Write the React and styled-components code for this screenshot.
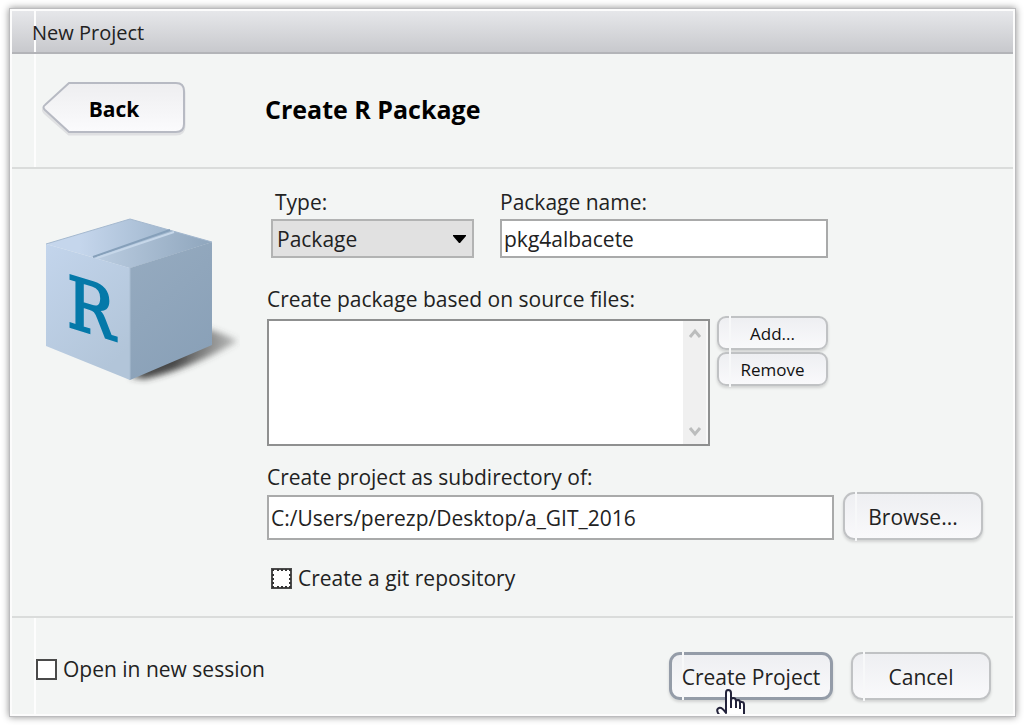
import React from 'react';
import styled, { createGlobalStyle } from 'styled-components';

const GlobalStyle = createGlobalStyle`
  *, *::before, *::after { box-sizing: border-box; }
  body {
    margin: 0;
    background: #fff;
    color: #222;
    font: 21px/24px "Open Sans", "Noto Sans", sans-serif;
  }
  button, input, select { font: inherit; color: inherit; margin: 0; }
`;

const Page = styled.div`
  min-height: 100vh;
  padding: 9px 9px 9px 10px;
  display: flex;
  overflow: hidden;
`;

const Dialog = styled.form`
  flex: 1;
  display: flex;
  flex-direction: column;
  background: #f3f5f4;
  border: 2px solid #fcfcfc;
  outline: 1px solid #bcbcbe;
  box-shadow: 0 0 7px 1px rgba(0, 0, 0, 0.45);
`;

const seam = 'linear-gradient(#fdfdfd, #fdfdfd) 22px 0 / 2px 100% no-repeat';

const TitleBar = styled.header`
  height: 43px;
  padding: 2px 20px 0;
  display: flex;
  align-items: center;
  font-size: 20px;
  background: ${seam}, linear-gradient(#e6e7ea, #c8c9cd);
  border-bottom: 2px solid #b3b4b8;
`;

const Head = styled.div`
  height: 115px;
  padding: 28px 30px;
  display: flex;
  align-items: flex-start;
  gap: 79px;
  background: ${seam};
  border-bottom: 2px solid #dadcdb;
`;

const BackButton = styled.button`
  display: grid;
  width: 144px;
  height: 54px;
  padding: 0;
  border: 0;
  background: none;
  color: #000;
  font-weight: 700;
  > * { grid-area: 1 / 1; }
  span { align-self: center; line-height: 54px; }
`;

const Heading = styled.h1`
  margin: 0;
  font-size: 25px;
  line-height: 54px;
  font-weight: 700;
  color: #000;
`;

const Body = styled.main`
  flex: 1;
  display: flex;
  gap: 27px;
  padding: 21px 30px 26px 28px;
`;

const Art = styled.svg`
  flex: none;
  margin-top: 20px;
`;

const Fields = styled.div`
  flex: 1;
  min-width: 0;
  display: flex;
  flex-direction: column;
`;

const Upper = styled.div`
  margin-right: 155px;
`;

const Row = styled.div`
  display: flex;
  align-items: ${(p) => p.$align || 'flex-start'};
  gap: ${(p) => p.$gap}px;
  padding-left: ${(p) => p.$inset || 0}px;
`;

const Field = styled.div`
  display: flex;
  flex-direction: column;
  gap: 5px;
  flex: ${(p) => (p.$width ? `0 0 ${p.$width}px` : '1 1 0')};
  min-width: 0;
`;

const Label = styled.label`
  display: block;
  padding-left: ${(p) => p.$inset || 0}px;
  margin: ${(p) => p.$space || '0'};
`;

const TextBox = styled.input`
  flex: ${(p) => (p.$grow ? 1 : 'none')};
  min-width: 0;
  width: 100%;
  height: ${(p) => p.$height}px;
  padding: 1px 2px 0;
  border: 2px solid #a9aaaa;
  border-radius: 0;
  background: #fff;
`;

const SelectWrap = styled.div`
  display: grid;
  align-items: center;
  > * { grid-area: 1 / 1; }
  svg { justify-self: end; margin-right: 8px; pointer-events: none; }
`;

const Select = styled.select`
  appearance: none;
  width: 100%;
  height: 39px;
  padding: 1px 4px 0;
  line-height: 32px;
  border: 2px solid #b2b3b3;
  border-radius: 0;
  background: #e1e1e1;
`;

const ListFrame = styled.div`
  flex: 1;
  display: flex;
  height: 127px;
  border: 2px solid #8f9090;
  background: #fff;
`;

const FileList = styled.select`
  flex: 1;
  min-width: 0;
  appearance: none;
  border: 0;
  padding: 0;
  background: #fff;
  overflow: hidden;
`;

const ScrollTrack = styled.div`
  width: 25px;
  padding: 7px 0;
  display: flex;
  flex-direction: column;
  justify-content: space-between;
  align-items: center;
  background: #f0f0f0;
  border-right: 2px solid #f9f9f9;
`;

const Stack = styled.div`
  width: 111px;
  display: flex;
  flex-direction: column;
  gap: 2px;
  margin-top: -3px;
`;

const Button = styled.button`
  position: relative;
  isolation: isolate;
  flex: none;
  width: ${(p) => p.$width || 140}px;
  height: ${(p) => (p.$small ? 34 : 48)}px;
  padding: 2px 0 0;
  white-space: nowrap;
  color: ${(p) => (p.$small ? '#111' : '#222')};
  font-size: ${(p) => (p.$small ? 17 : 21)}px;
  font-weight: ${(p) => (p.$small ? 500 : 400)};
  border: ${(p) => (p.$primary ? '3px solid #949ca8' : '2px solid #c0c2c4')};
  border-radius: ${(p) => (p.$small ? 9 : 11)}px;
  background: linear-gradient(#eeeff2, #f9f9fb);
  box-shadow: 0 2px 3px rgba(0, 0, 0, 0.14);
  &::before {
    content: '';
    position: absolute;
    z-index: -1;
    top: -3px;
    bottom: -3px;
    left: 10px;
    width: 2px;
    background: #f7f8f9;
  }
`;

const Pointer = styled.svg`
  position: absolute;
  left: 43px;
  top: 34px;
`;

const Check = styled.label`
  display: flex;
  align-items: center;
  gap: 6px;
  margin-top: ${(p) => p.$top || 0}px;
  padding-left: ${(p) => p.$inset || 0}px;
`;

const CheckBox = styled.input`
  appearance: none;
  width: 21px;
  height: 21px;
  border: 2px solid #4a4a4a;
  background: #fff;
  outline: ${(p) => (p.$marked ? '2px dotted #333' : 'none')};
  outline-offset: -3px;
`;

const Footer = styled.footer`
  height: 98px;
  padding: 0 22px 0 24px;
  display: flex;
  align-items: center;
  overflow: hidden;
  background: ${seam};
  border-top: 2px solid #dadcdb;
`;

const Actions = styled.div`
  margin-left: auto;
  margin-top: 20px;
  display: flex;
  gap: 18px;
`;

const Chevron = ({ down }) => (
  <svg width="14" height="12" viewBox="0 0 14 12" fill="none" stroke="#bcbdbd" strokeWidth="3" aria-hidden="true">
    <path d={down ? 'M2 3 L7 9 L12 3' : 'M2 9 L7 3 L12 9'} />
  </svg>
);

const PackageArt = () => (
  <Art width="200" height="180" viewBox="40 210 200 180" aria-hidden="true">
    <defs>
      <linearGradient id="top" x1="0" y1="0" x2="1" y2="0">
        <stop offset="0.2" stopColor="#c5d6ec" />
        <stop offset="0.8" stopColor="#9db4cb" />
      </linearGradient>
      <linearGradient id="flap" x1="0" y1="0" x2="1" y2="0">
        <stop offset="0" stopColor="#bacce0" />
        <stop offset="1" stopColor="#8fa6bd" />
      </linearGradient>
      <linearGradient id="left" x1="0" y1="0" x2="0.6" y2="1">
        <stop offset="0" stopColor="#c3d5ec" />
        <stop offset="1" stopColor="#b2c5d9" />
      </linearGradient>
      <linearGradient id="right" x1="0" y1="0" x2="0.5" y2="1">
        <stop offset="0" stopColor="#96abc0" />
        <stop offset="1" stopColor="#8aa1b8" />
      </linearGradient>
      <linearGradient id="fade" x1="0" y1="0" x2="1" y2="0">
        <stop offset="0.4" stopColor="#333" stopOpacity="0.9" />
        <stop offset="1" stopColor="#555" stopOpacity="0.35" />
      </linearGradient>
      <filter id="soft" x="-20%" y="-30%" width="140%" height="160%">
        <feGaussianBlur stdDeviation="3" />
      </filter>
    </defs>
    <path d="M130 377 L145 379 Q192 368 238 341 Q222 333 208 329 Z" fill="url(#fade)" filter="url(#soft)" />
    <path d="M46 244 L130 219 L212 242 L130 268 Z" fill="url(#top)" />
    <path d="M96 258 L172 231 L212 242 L130 268 Z" fill="url(#flap)" />
    <path d="M46 244 L130 268 V380 L46 346 Z" fill="url(#left)" />
    <path d="M130 268 L212 242 V345 L130 380 Z" fill="url(#right)" />
    <path d="M46 244 L130 219 L212 242" fill="none" stroke="#a5b9cf" strokeWidth="1" />
    <path d="M130 268 V380" stroke="#a9bdd1" strokeWidth="1" />
    <path d="M93 257 L170 230" stroke="#86a0ba" strokeWidth="2" />
    <path d="M97 258 L174 232" stroke="#c6d7e9" strokeWidth="2" />
    <text
      transform="translate(67 326) skewY(17)"
      fontFamily='"DejaVu Serif Condensed", "DejaVu Serif", serif'
      fontSize="71"
      fill="#0579a9"
      stroke="#0579a9"
      strokeWidth="2"
    >
      R
    </text>
  </Art>
);

export default function App() {
  return (
    <>
      <GlobalStyle />
      <Page>
        <Dialog onSubmit={(e) => e.preventDefault()}>
          <TitleBar>New Project</TitleBar>
          <Head>
            <BackButton type="button">
              <svg width="144" height="54" viewBox="0 0 144 54" aria-hidden="true">
                <defs>
                  <linearGradient id="back" x1="0" y1="0" x2="0" y2="1">
                    <stop offset="0" stopColor="#eeeef0" />
                    <stop offset="1" stopColor="#fbfbfd" />
                  </linearGradient>
                </defs>
                <path
                  d="M27 3 H134 Q142 3 142 11 V44 Q142 52 134 52 H27 L3 31 Q0 28 3 25 Z"
                  fill="none"
                  stroke="#dfe0e2"
                  strokeWidth="3"
                />
                <path
                  d="M27 1 H134 Q142 1 142 9 V42 Q142 50 134 50 H27 L3 28 Q0 25 3 23 Z"
                  fill="url(#back)"
                  stroke="#b7bac3"
                  strokeWidth="2"
                />
              </svg>
              <span>Back</span>
            </BackButton>
            <Heading>Create R Package</Heading>
          </Head>
          <Body>
            <PackageArt />
            <Fields>
              <Upper>
                <Row $gap={26} $inset={4}>
                  <Field $width={203}>
                    <Label htmlFor="type" $inset={4}>Type:</Label>
                    <SelectWrap>
                      <Select id="type" defaultValue="Package">
                        <option>Package</option>
                      </Select>
                      <svg width="13" height="8" viewBox="0 0 13 8" aria-hidden="true">
                        <path d="M0 0 H13 V1 L7 8 H6 L0 1 Z" fill="#000" />
                      </svg>
                    </SelectWrap>
                  </Field>
                  <Field>
                    <Label htmlFor="name">Package name:</Label>
                    <TextBox id="name" $height={39} defaultValue="pkg4albacete" />
                  </Field>
                </Row>
                <Label htmlFor="files" $space="29px 0 8px">Create package based on source files:</Label>
                <Row $gap={7}>
                  <ListFrame>
                    <FileList id="files" multiple />
                    <ScrollTrack>
                      <Chevron />
                      <Chevron down />
                    </ScrollTrack>
                  </ListFrame>
                  <Stack>
                    <Button type="button" $small $width={111}>Add...</Button>
                    <Button type="button" $small $width={111}>Remove</Button>
                  </Stack>
                </Row>
              </Upper>
              <Label htmlFor="dir" $space="19px 0 3px">Create project as subdirectory of:</Label>
              <Row $gap={9} $align="flex-end">
                <TextBox id="dir" $grow $height={45} defaultValue="C:/Users/perezp/Desktop/a_GIT_2016" />
                <Button type="button">Browse...</Button>
              </Row>
              <Check $top={26} $inset={4}>
                <CheckBox type="checkbox" $marked />
                Create a git repository
              </Check>
            </Fields>
          </Body>
          <Footer>
            <Check $top={6}>
              <CheckBox type="checkbox" />
              Open in new session
            </Check>
            <Actions>
              <Button type="submit" $primary $width={164}>
                Create Project
                <Pointer width="32" height="36" viewBox="0 0 32 36" aria-hidden="true">
                  <path
                    d="M11 24 V4 Q11 1 13 1 Q16 1 16 4 V12 Q16 9 18 9 Q21 9 21 12 V13 Q21 11 23 11 Q25 11 25 14 Q25 12 27 13 Q29 13 29 16 V34 H10 L3 24 Q1 20 4 19 Q7 18 11 24 Z"
                    fill="#fff"
                    stroke="#23233b"
                    strokeWidth="2"
                    strokeLinejoin="round"
                  />
                  <path d="M16 11 V19 M21 12 V19 M25 14 V20" stroke="#23233b" strokeWidth="2" />
                </Pointer>
              </Button>
              <Button type="button">Cancel</Button>
            </Actions>
          </Footer>
        </Dialog>
      </Page>
    </>
  );
}
